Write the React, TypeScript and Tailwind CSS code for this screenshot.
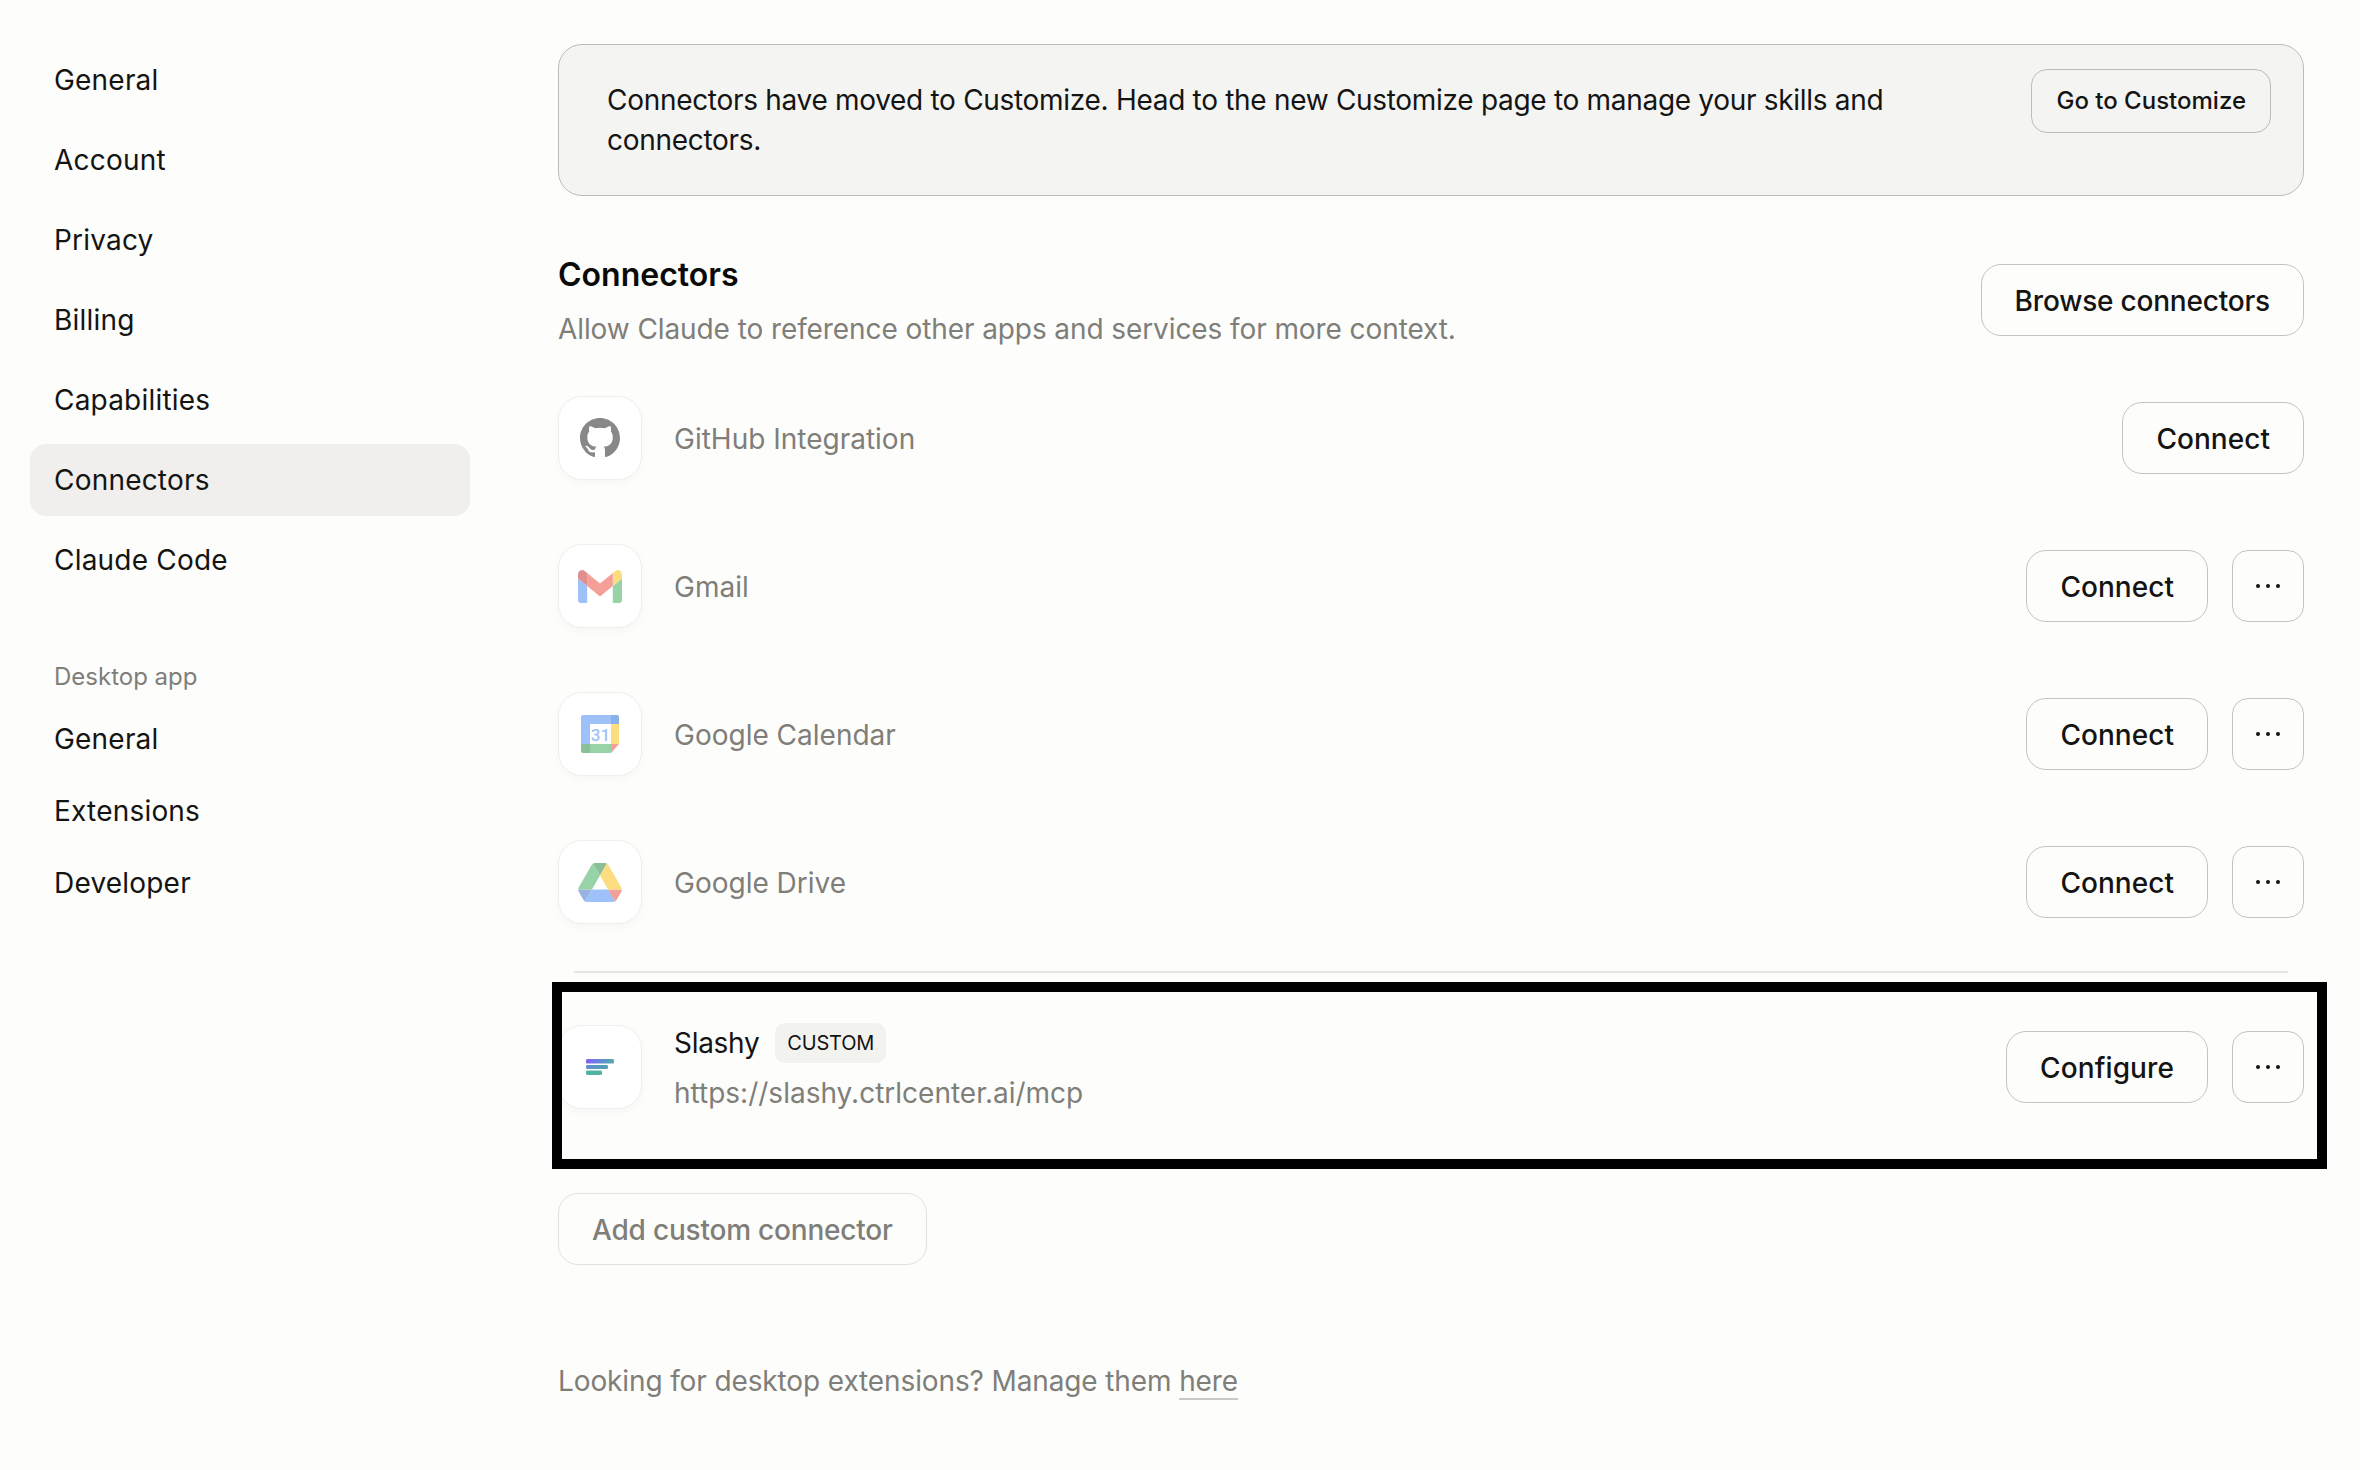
import type { ReactNode } from 'react'

const mainNav = ['General', 'Account', 'Privacy', 'Billing', 'Capabilities', 'Connectors', 'Claude Code']
const desktopNav = ['General', 'Extensions', 'Developer']

function GithubIcon() {
  return (
    <svg viewBox="0 0 16 16" className="h-[40px] w-[40px]" fill="#141413">
      <path d="M8 0C3.58 0 0 3.58 0 8c0 3.54 2.29 6.53 5.47 7.59.4.07.55-.17.55-.38 0-.19-.01-.82-.01-1.49-2.01.37-2.53-.49-2.69-.94-.09-.23-.48-.94-.82-1.13-.28-.15-.68-.52-.01-.53.63-.01 1.08.58 1.23.82.72 1.21 1.87.87 2.33.66.07-.52.28-.87.51-1.07-1.78-.2-3.64-.89-3.64-3.95 0-.87.31-1.59.82-2.15-.08-.2-.36-1.02.08-2.12 0 0 .67-.21 2.2.82.64-.18 1.32-.27 2-.27.68 0 1.36.09 2 .27 1.53-1.04 2.2-.82 2.2-.82.44 1.1.16 1.92.08 2.12.51.56.82 1.27.82 2.15 0 3.07-1.87 3.75-3.65 3.95.29.25.54.73.54 1.48 0 1.07-.01 1.93-.01 2.2 0 .21.15.46.55.38A8.013 8.013 0 0016 8c0-4.42-3.58-8-8-8z" />
    </svg>
  )
}

function GmailIcon() {
  return (
    <svg viewBox="0 1.5 24 16.5" className="h-[33px] w-[44px]" preserveAspectRatio="none">
      <path fill="#4285f4" d="M1.5 18H5V9.5L0 5.75V16.5C0 17.33.67 18 1.5 18z" />
      <path fill="#34a853" d="M19 18h3.5c.83 0 1.5-.67 1.5-1.5V5.75L19 9.5z" />
      <path fill="#fbbc04" d="M19 3v6.5l5-3.75v-2c0-1.85-2.11-2.91-3.6-1.8z" />
      <path fill="#ea4335" d="M5 9.5V3l7 5.25L19 3v6.5l-7 5.25z" />
      <path fill="#c5221f" d="M0 3.75v2L5 9.5V3L3.6 1.95C2.11.84 0 1.9 0 3.75z" />
    </svg>
  )
}

function CalendarIcon() {
  return (
    <svg viewBox="0 0 38 38" className="h-[38px] w-[38px]">
      <path fill="#4285f4" d="M2 0h28v9H9v20H0V2a2 2 0 0 1 2-2z" />
      <path fill="#1967d2" d="M30 0h6a2 2 0 0 1 2 2v7h-8z" />
      <path fill="#fbbc04" d="M30 9h8v20h-8z" />
      <path fill="#34a853" d="M9 29h21v9H9z" />
      <path fill="#188038" d="M0 29h9v9H2a2 2 0 0 1-2-2z" />
      <path fill="#ea4335" d="M30 29h8l-8 9z" />
      <text x="19.5" y="25.5" textAnchor="middle" fontSize="17" fontWeight="500" fill="#4285f4" fontFamily="Roboto, sans-serif">
        31
      </text>
    </svg>
  )
}

function DriveIcon() {
  return (
    <svg viewBox="0 0 87.3 78" className="h-[39px] w-[44px]">
      <path fill="#3367c8" d="m6.6 66.85 3.85 6.65c.8 1.4 1.95 2.5 3.3 3.3l13.75-23.8h-27.5c0 1.55.4 3.1 1.2 4.5z" />
      <path fill="#34a853" d="m43.65 25-13.75-23.8c-1.35.8-2.5 1.9-3.3 3.3l-25.4 44a9.06 9.06 0 0 0-1.2 4.5h27.5z" />
      <path fill="#ea4335" d="m73.55 76.8c1.35-.8 2.5-1.9 3.3-3.3l1.6-2.75 7.65-13.25c.8-1.4 1.2-2.95 1.2-4.5h-27.502l5.852 11.5z" />
      <path fill="#188038" d="m43.65 25 13.75-23.8c-1.35-.8-2.9-1.2-4.5-1.2h-18.5c-1.6 0-3.15.45-4.5 1.2z" />
      <path fill="#4285f4" d="m59.8 53h-32.3l-13.75 23.8c1.35.8 2.9 1.2 4.5 1.2h50.8c1.6 0 3.15-.45 4.5-1.2z" />
      <path fill="#fbbc04" d="m73.4 26.5-12.7-22c-.8-1.4-1.95-2.5-3.3-3.3l-13.75 23.8 16.15 28h27.45c0-1.55-.4-3.1-1.2-4.5z" />
    </svg>
  )
}

function SlashyIcon() {
  return (
    <svg viewBox="0 0 28 16" className="h-[16px] w-[28px]">
      <defs>
        <linearGradient id="slashy" x1="0" y1="0" x2="28" y2="8" gradientUnits="userSpaceOnUse">
          <stop offset="0" stopColor="#8560f0" />
          <stop offset="0.55" stopColor="#5f8fd0" />
          <stop offset="1" stopColor="#4fb3a0" />
        </linearGradient>
        <linearGradient id="slashy2" x1="0" y1="0" x2="22" y2="0" gradientUnits="userSpaceOnUse">
          <stop offset="0" stopColor="#5f8fd0" />
          <stop offset="1" stopColor="#4f9fb0" />
        </linearGradient>
      </defs>
      <rect x="0" y="0" width="28" height="4.6" rx="1.4" fill="url(#slashy)" />
      <rect x="0" y="6" width="22" height="4" rx="1.4" fill="url(#slashy2)" />
      <rect x="0" y="11.6" width="16" height="4.4" rx="1.4" fill="#4fb3a0" />
    </svg>
  )
}

function IconBox({ children, dim }: { children: ReactNode; dim?: boolean }) {
  return (
    <div className="flex h-[84px] w-[84px] shrink-0 items-center justify-center rounded-[24px] border border-[#f0efec] bg-white shadow-[0_3px_8px_rgba(0,0,0,0.03)]">
      <div className={dim ? 'flex opacity-50' : 'flex'}>{children}</div>
    </div>
  )
}

function OutlineButton({ label, muted, className = '' }: { label: string; muted?: boolean; className?: string }) {
  return (
    <button
      className={
        (muted
          ? 'flex h-[72px] items-center rounded-[20px] border border-[#e3e2de] px-[33px] pt-[2px] text-[28px] font-medium text-[#7f7e79] '
          : 'flex h-[72px] items-center rounded-[20px] border border-[#c4c3be] px-[33px] pt-[2px] text-[28px] font-medium text-[#141413] ') +
        className
      }
    >
      {label}
    </button>
  )
}

function MoreButton() {
  return (
    <button className="flex h-[72px] w-[72px] items-center justify-center rounded-[16px] border border-[#c4c3be]">
      <svg viewBox="0 0 24 4" className="h-[4px] w-[24px]" fill="#141413">
        <circle cx="2" cy="2" r="2" />
        <circle cx="12" cy="2" r="2" />
        <circle cx="22" cy="2" r="2" />
      </svg>
    </button>
  )
}

function ConnectorRow({ name, icon, more }: { name: string; icon: ReactNode; more?: boolean }) {
  return (
    <div className="flex h-[84px] items-center">
      <IconBox dim>{icon}</IconBox>
      <div className="ml-[32px] flex-1 pt-[2px] text-[28px] text-[#7f7e79]">{name}</div>
      <div className="flex items-center gap-[24px]">
        <OutlineButton label="Connect" className="tracking-[0.05px]" />
        {more && <MoreButton />}
      </div>
    </div>
  )
}

export default function App() {
  return (
    <div className="flex min-h-[1470px] bg-[#fdfdfc] font-['Inter',sans-serif] text-[#141413]">
      <aside className="ml-[30px] mt-[44px] w-[440px] shrink-0">
        <nav className="flex flex-col gap-[8px]">
          {mainNav.map((item) => (
            <div
              key={item}
              className={
                item === 'Connectors'
                  ? 'flex h-[72px] items-center rounded-[16px] bg-[#f0efed] px-[24px] text-[28px] tracking-[0.2px]'
                  : 'flex h-[72px] items-center px-[24px] text-[28px] tracking-[0.2px]'
              }
            >
              {item}
            </div>
          ))}
        </nav>
        <div className="mt-[61px] flex h-[40px] items-center px-[24px] text-[24px] text-[#7f7e79]">Desktop app</div>
        <nav className="mt-[6px] flex flex-col">
          {desktopNav.map((item) => (
            <div key={item} className="flex h-[72px] items-center px-[24px] text-[28px] tracking-[0.2px]">
              {item}
            </div>
          ))}
        </nav>
      </aside>

      <main className="ml-[88px] mt-[44px] w-[1746px] shrink-0">
        <div className="flex h-[152px] items-start justify-between rounded-[24px] border border-[#bdbcb7] bg-[#f4f4f2] pl-[48px] pr-[32px] pt-[24px]">
          <p className="w-[1320px] pt-[11px] text-[28px] leading-[40px] tracking-[-0.3px]">
            Connectors have moved to Customize. Head to the new Customize page to manage your skills and connectors.
          </p>
          <button className="flex h-[64px] items-center rounded-[16px] border border-[#bdbcb7] px-[24px] text-[24px] font-medium">
            Go to Customize
          </button>
        </div>

        <div className="mt-[58px] flex items-center justify-between">
          <div>
            <h2 className="mt-[1px] text-[32px] font-semibold leading-[40px] text-[#0a0a09]">Connectors</h2>
            <p className="mt-[14px] text-[28px] leading-[40px] tracking-[-0.09px] text-[#7f7e79]">
              Allow Claude to reference other apps and services for more context.
            </p>
          </div>
          <OutlineButton label="Browse connectors" className="mb-[3px] tracking-[-0.2px]" />
        </div>

        <div className="mt-[47px] flex flex-col gap-[64px]">
          <ConnectorRow name="GitHub Integration" icon={<GithubIcon />} />
          <ConnectorRow name="Gmail" icon={<GmailIcon />} more />
          <ConnectorRow name="Google Calendar" icon={<CalendarIcon />} more />
          <ConnectorRow name="Google Drive" icon={<DriveIcon />} more />
        </div>

        <div className="mx-[16px] mt-[47px] h-[2px] bg-[#e6e5e1]" />

        <div className="relative mt-[52px] flex h-[84px] items-center">
          <IconBox>
            <SlashyIcon />
          </IconBox>
          <div className="mb-[2px] ml-[32px] flex-1">
            <div className="flex items-center gap-[16px] pt-[3px]">
              <span className="text-[28px] tracking-[-0.3px]">Slashy</span>
              <span className="flex h-[40px] items-center rounded-[10px] bg-[#f2f2ef] px-[12px] text-[20px] tracking-[-0.2px]">
                CUSTOM
              </span>
            </div>
            <div className="mt-[8px] text-[28px] text-[#7f7e79]">https://slashy.ctrlcenter.ai/mcp</div>
          </div>
          <div className="flex items-center gap-[24px]">
            <OutlineButton label="Configure" className="tracking-[0.1px]" />
            <MoreButton />
          </div>
          {/* black selection frame sits on top of the row */}
          <div className="pointer-events-none absolute bottom-[-60px] left-[-6px] right-[-23px] top-[-43px] border-[10px] border-black" />
        </div>

        <div className="mt-[84px] flex">
          <OutlineButton label="Add custom connector" muted className="tracking-[-0.2px]" />
        </div>

        <p className="mt-[96px] text-[28px] leading-[40px] tracking-[-0.12px] text-[#7f7e79]">
          Looking for desktop extensions? Manage them{' '}
          <span className="border-b-2 border-[#c9c8c3]">here</span>
        </p>
      </main>
    </div>
  )
}
